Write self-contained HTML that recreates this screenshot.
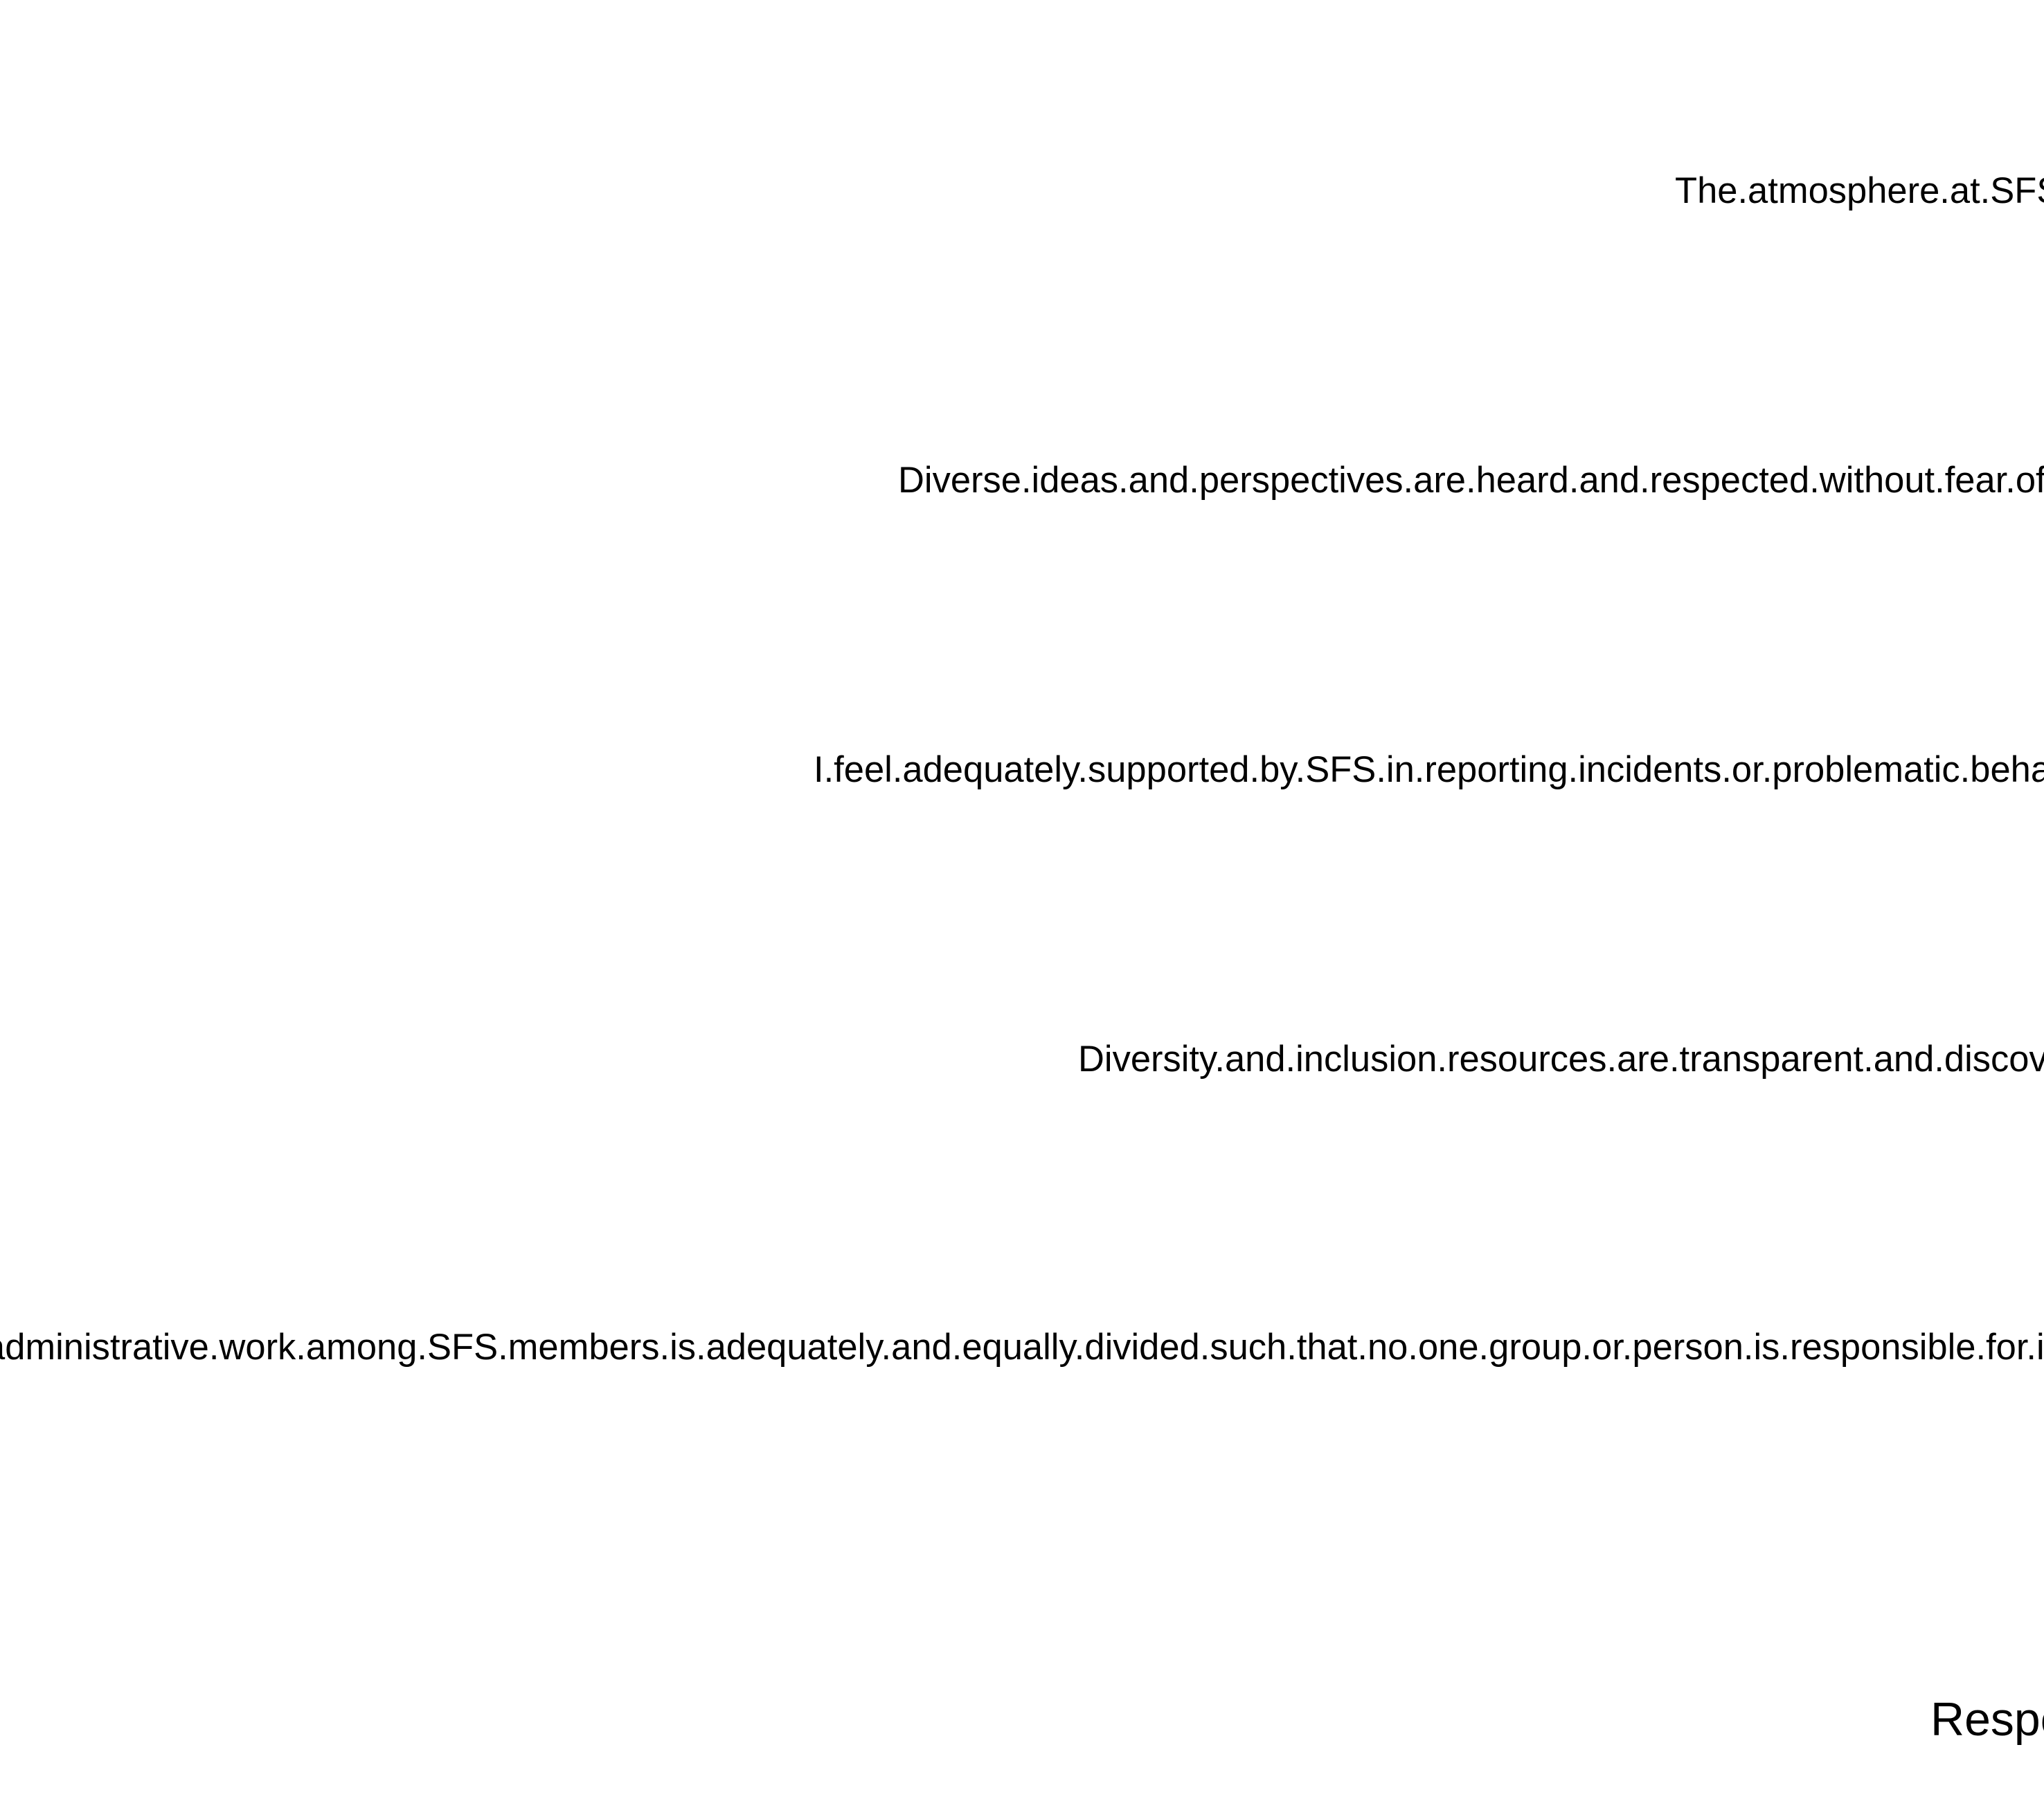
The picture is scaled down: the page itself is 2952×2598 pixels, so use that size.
<!DOCTYPE html>
<html><head><style>
html,body{margin:0;padding:0;background:#fff;}
body{width:2952px;height:2598px;position:relative;overflow:hidden;font-family:"Liberation Sans",Arial,sans-serif;color:#000;}
.t{position:absolute;white-space:nowrap;font-size:52.5px;line-height:normal;}
</style></head><body>
<div class="t" style="left:2419px;top:245px;">The.atmosphere.at.SFS.is.welcoming.and.inclusive</div>
<div class="t" style="left:1297px;top:663px;">Diverse.ideas.and.perspectives.are.heard.and.respected.without.fear.of.retaliation</div>
<div class="t" style="left:1175px;top:1081px;">I.feel.adequately.supported.by.SFS.in.reporting.incidents.or.problematic.behaviors</div>
<div class="t" style="left:1557px;top:1499px;">Diversity.and.inclusion.resources.are.transparent.and.discoverable</div>
<div class="t" style="left:-22px;top:1915px;">administrative.work.among.SFS.members.is.adequately.and.equally.divided.such.that.no.one.group.or.person.is.responsible.for.it</div>
<div class="t" style="left:2788px;top:2444px;font-size:68px;">Response</div>
</body></html>
